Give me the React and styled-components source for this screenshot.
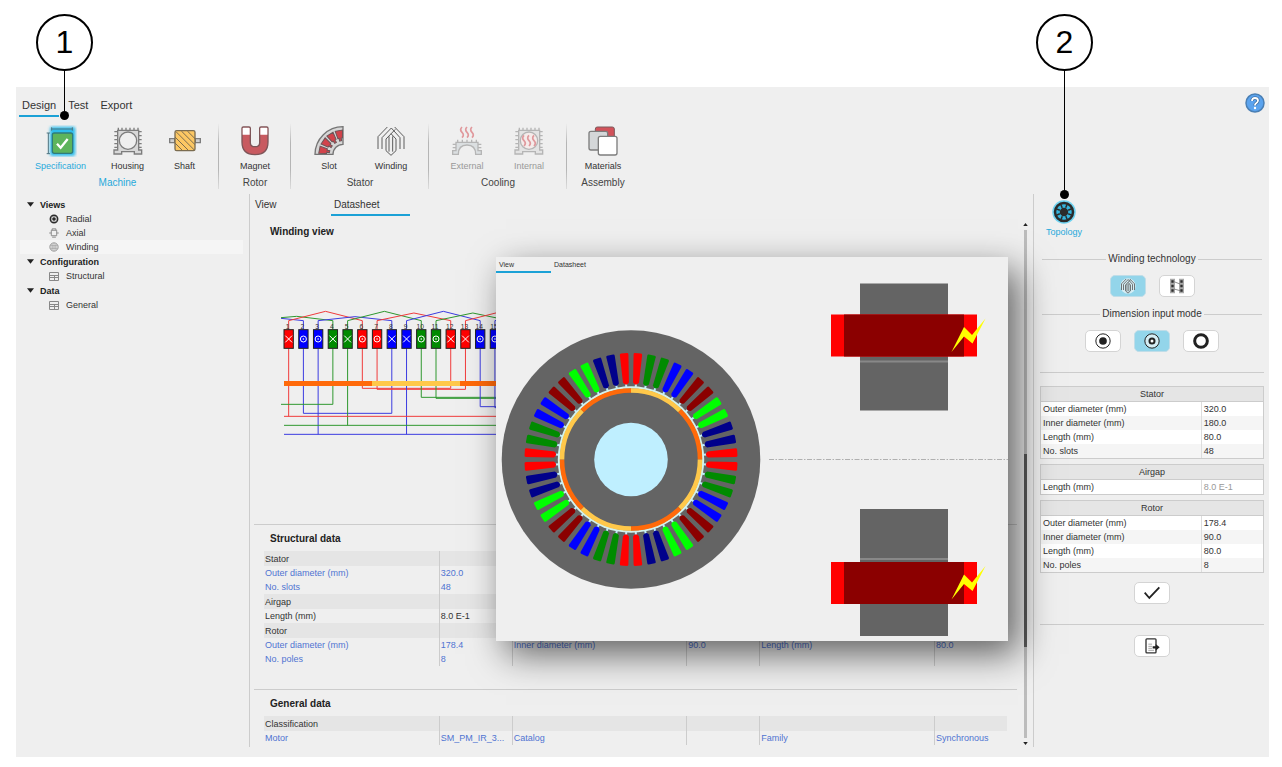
import React, { useState } from 'react';
import styled, { createGlobalStyle, css } from 'styled-components';

const GlobalStyle = createGlobalStyle`
  * {
    box-sizing: border-box;
  }
  body {
    margin: 0;
    background: #ffffff;
    color: #333333;
    font-family: 'Liberation Sans', Arial, sans-serif;
    font-size: 9px;
    line-height: 14px;
  }
  button {
    margin: 0;
    padding: 0;
    border: 0;
    background: none;
    color: inherit;
    font: inherit;
    cursor: pointer;
  }
  svg {
    display: block;
  }
`;

const Page = styled.div`
  position: relative;
  padding: 87px 13px 10px 16px;
`;
const Window = styled.div`
  display: flex;
  flex-direction: column;
  padding-bottom: 10px;
  background: #efefef;
`;

/* callouts */
const Callout = styled.div`
  position: absolute;
  z-index: 5;
  top: 14px;
  ${(p) => (p.$right ? 'right: 189px;' : 'left: 36px;')}
  display: flex;
  flex-direction: column;
  align-items: center;
  width: 57px;
  pointer-events: none;
`;
const CalloutNumber = styled.span`
  width: 57px;
  height: 57px;
  border: 2px solid #000000;
  border-radius: 50%;
  background: #ffffff;
  color: #000000;
  font-size: 32px;
  line-height: 52px;
  text-align: center;
`;
const CalloutLine = styled.span`
  width: 1px;
  height: ${(p) => p.$length}px;
  background: #000000;
`;
const CalloutDot = styled.span`
  width: 9px;
  height: 9px;
  border-radius: 50%;
  background: #000000;
`;

/* top menu */
const Menu = styled.header`
  display: flex;
  align-items: flex-start;
  justify-content: space-between;
  height: 30px;
  padding: 6px 4px 0 3px;
`;
const MenuTabs = styled.nav`
  display: flex;
  gap: 6px;
  padding-top: 5px;
`;
const MenuTab = styled.button`
  padding: 0 3px 3px;
  border-bottom: 2px solid ${(p) => (p.$active ? '#1ba1d6' : 'transparent')};
  font-size: 11px;
`;

/* toolbar */
const Toolbar = styled.div`
  display: flex;
  padding-top: 5px;
`;
const ToolGroup = styled.section`
  display: flex;
  flex-direction: column;
  align-items: center;
  gap: 3px;
  padding: 3px ${(p) => p.$pad}px 0;
  color: ${(p) => (p.$active ? '#27a9db' : '#444444')};
  background: linear-gradient(#efefef, #b5b5b5 30%, #b5b5b5 70%, #dddddd) right / 1px 66px no-repeat;
  &:last-child {
    background: none;
  }
`;
const ToolRow = styled.div`
  display: flex;
`;
const ToolButton = styled.button`
  display: flex;
  flex-direction: column;
  align-items: center;
  gap: 2px;
  width: ${(p) => p.$width}px;
  color: ${(p) => (p.$active ? '#27a9db' : '#333333')};
  &:disabled {
    color: #999999;
    cursor: default;
  }
  &:disabled svg {
    opacity: 0.5;
  }
`;
const GroupName = styled.span`
  font-size: 10px;
`;

/* three columns */
const Body = styled.div`
  display: flex;
  align-items: stretch;
  margin-top: 4px;
`;
const Sidebar = styled.aside`
  flex: 0 0 234px;
  padding: 3px 6px 0 4px;
  border-right: 1px solid #cccccc;
`;
const TreeList = styled.ul`
  margin: 0;
  padding: 0;
  list-style: none;
`;
const TreeGroup = styled.button`
  display: flex;
  align-items: center;
  gap: 6px;
  height: 15px;
  padding-left: 7px;
  font-weight: bold;
  color: #222222;
`;
const TreeItem = styled.button`
  display: flex;
  align-items: center;
  gap: 7px;
  width: 100%;
  height: 14px;
  padding-left: 29px;
  background: ${(p) => (p.$active ? '#f5f5f5' : 'none')};
`;

const Main = styled.main`
  position: relative;
  z-index: 1;
  display: flex;
  flex: 1;
  flex-direction: column;
  min-width: 0;
  border-right: 1px solid #cccccc;
`;
const Tabs = styled.div`
  display: flex;
  padding-left: 2px;
`;
const Tab = styled.button`
  width: 79px;
  padding: ${(p) => (p.$small ? '2px 3px 0' : '4px 3px 2px')};
  border-bottom: 2px solid ${(p) => (p.$active ? '#1ba1d6' : 'transparent')};
  font-size: 10px;
  text-align: left;
  ${(p) =>
    p.$small &&
    css`
      width: 55px;
      font-size: 7px;
      line-height: 12px;
    `}
`;
const SheetArea = styled.div`
  display: flex;
  flex: 1;
`;
const Sheet = styled.div`
  flex: 1;
  min-width: 0;
  padding-left: 4px;
`;
const SheetSection = styled.section`
  overflow: hidden;
  padding-bottom: ${(p) => p.$bottom}px;
  border-top: 1px solid #cccccc;
  &:first-child {
    padding-top: 1px;
    border-color: transparent;
  }
`;
const SheetTitle = styled.h2`
  margin: 7px 0 6px 16px;
  color: #222222;
  font-size: 10px;
  font-weight: bold;
  line-height: 13px;
`;
const Figure = styled.figure`
  margin: 0;
  padding: 66px 0 87px 26px;
`;
const DataTable = styled.table`
  width: calc(100% - 20px);
  margin: 0 10px;
  border-spacing: 0;
  table-layout: fixed;
`;
const ValueCol = styled.col`
  width: 73px;
`;
const DataRow = styled.tr`
  height: ${(p) => (p.$head ? 15 : 14)}px;
  background: ${(p) => (p.$head ? '#e5e5e5' : 'none')};
  color: ${(p) => (p.$link ? '#4f74d2' : '#333333')};
`;
const DataCell = styled.td`
  overflow: hidden;
  padding: 0 1px;
  border-left: 1px solid #cccccc;
  text-overflow: ellipsis;
  white-space: nowrap;
  &:first-child {
    border-left: 0;
  }
`;

const Scrollbar = styled.div`
  display: flex;
  flex: 0 0 16px;
  flex-direction: column;
  align-items: center;
  gap: 4px;
  padding: 7px 0 2px;
`;
const ScrollTrack = styled.div`
  display: flex;
  flex: 1;
  flex-direction: column;
  width: 3px;
  background: #bcbcbc;
`;
const ScrollGap = styled.div`
  flex: ${(p) => p.$size};
`;
const ScrollThumb = styled.div`
  flex: 38;
  background: #5a5a5a;
`;

const Preview = styled.section`
  position: absolute;
  top: 63px;
  right: 25px;
  width: 512px;
  background: #efefef;
  box-shadow: 10px 13px 34px rgba(0, 0, 0, 0.6);
`;
const PreviewTabs = styled.div`
  display: flex;
`;

/* right panel */
const Panel = styled.aside`
  flex: 0 0 235px;
  padding: 6px 5px 0 6px;
`;
const TopologyButton = styled.button`
  display: flex;
  flex-direction: column;
  align-items: center;
  gap: 1px;
  width: 48px;
  color: #27a9db;
`;
const Choice = styled.fieldset`
  min-width: 0;
  margin: 0;
  padding: 0 2px;
  border: 0;
`;
const ChoiceName = styled.div`
  display: flex;
  align-items: center;
  gap: 2px;
  margin-top: ${(p) => p.$top}px;
  font-size: 10px;
  &::before,
  &::after {
    content: '';
    flex: 1;
    height: 1px;
    background: #cccccc;
  }
`;
const ButtonRow = styled.div`
  display: flex;
  justify-content: center;
  gap: 13px;
  margin-top: ${(p) => p.$top}px;
`;
const IconButton = styled.button`
  display: grid;
  place-items: center;
  width: 36px;
  height: 22px;
  border: 1px solid ${(p) => (p.$active ? '#c0dde8' : '#d4d4d4')};
  border-radius: 5px;
  background: ${(p) => (p.$active ? '#93d5ea' : '#ffffff')};
`;
const Rule = styled.hr`
  height: 1px;
  margin: 20px 0 ${(p) => p.$bottom}px;
  border: 0;
  background: #cccccc;
`;
const ParamTable = styled.table`
  width: 100%;
  margin-bottom: 5px;
  border: 1px solid #cccccc;
  border-spacing: 0;
  background: #ffffff;
  table-layout: fixed;
`;
const ParamHead = styled.th`
  height: 15px;
  padding: 0;
  border-bottom: 1px solid #cccccc;
  background: #e5e5e5;
  font-weight: normal;
`;
const ParamRow = styled.tr`
  height: 14px;
  &:nth-child(even) {
    background: #f5f5f5;
  }
`;
const ParamCell = styled.td`
  padding: 0 2px;
  color: ${(p) => (p.$muted ? '#999999' : '#333333')};
  & + & {
    border-left: 1px solid #dddddd;
  }
`;

/* icons, all drawn on a 96 unit grid */
const Icon = ({ size = 32, children }) => (
  <svg width={size} height={size} viewBox="0 0 96 96" fill="none" aria-hidden="true">
    {children}
  </svg>
);

const SpecificationIcon = () => (
  <Icon>
    <defs>
      <filter id="glow" x="-30%" y="-30%" width="160%" height="160%">
        <feGaussianBlur stdDeviation="4" />
      </filter>
    </defs>
    <rect x="15" y="5" width="76" height="88" rx="6" fill="#2fbdec" filter="url(#glow)" />
    <path d="M20 12h62M20 7v10M82 7v10M10 24v62M5 24h10M5 86h10" stroke="#4d7480" strokeWidth="3" />
    <rect x="22" y="24" width="61" height="61" rx="6" fill="#5db45c" stroke="#2f7c7c" strokeWidth="4" />
    <path d="M36 56l11 12 21-26" stroke="#ffffff" strokeWidth="7" />
  </Icon>
);
const CaseFrame = ({ hole }) => (
  <>
    <path
      d="M19 17v-9M30 17v-9M42 17v-9M54 17v-9M66 17v-9M78 17v-9M17 20H7M17 32H7M17 44H7M17 56H7M17 67H7M80 20h9M80 32h9M80 44h9M80 56h9M80 67h9"
      stroke="#7d7d7d"
      strokeWidth="4"
    />
    <path
      d="M17 16h63v59h9v12H67v-7H29v7H6V75h11z"
      fill="#d8d8d8"
      stroke="#7d7d7d"
      strokeWidth="4"
    />
    <circle cx="48" cy="47" r="26" fill={hole} stroke="#7d7d7d" strokeWidth="4" />
  </>
);
const HousingIcon = () => (
  <Icon>
    <CaseFrame hole="#efefef" />
  </Icon>
);
const ShaftIcon = () => (
  <Icon>
    <path d="M2 41h15v12H2zM79 41h15v12H79z" fill="#d0d0d0" stroke="#7d7d7d" strokeWidth="4" />
    <rect x="18" y="17" width="60" height="60" rx="5" fill="#fcc763" stroke="#7b6c50" strokeWidth="4" />
    <path d="M18 54l23 23M18 36l41 41M21 20l55 55M37 18l41 41M55 18l23 23" stroke="#7b6c50" strokeWidth="3" />
  </Icon>
);
const MagnetIcon = () => (
  <Icon>
    <path
      d="M9 10q0-4 4-4h17q4 0 4 4v43q0 12 14 12t14-12V10q0-4 4-4h17q4 0 4 4v41q0 38-39 38T9 51z"
      fill="#c85a60"
      stroke="#7d5558"
      strokeWidth="4"
    />
    <path d="M11 10q0-2 2-2h17q2 0 2 2v19H11zM64 10q0-2 2-2h17q2 0 2 2v19H64z" fill="#ffffff" />
  </Icon>
);
const SlotIcon = () => (
  <Icon>
    <path d="M6 88A84 84 0 0 1 90 5v53a30 30 0 0 0-30 30z" fill="#d6d6d6" stroke="#757575" strokeWidth="4" />
    {[11, 34, 57, 80].map((angle) => (
      <path
        key={angle}
        d="M18 77l23 4v4h8v6h-8v4l-23 4z"
        transform={`rotate(${angle} 90 88)`}
        fill="#d2434b"
        stroke="#6c5558"
        strokeWidth="3"
      />
    ))}
  </Icon>
);
const WindingIcon = ({ size, width = 3, disc }) => (
  <Icon size={size}>
    {disc && <circle cx="48" cy="48" r="46" fill="#d5edf4" />}
    <path
      d="M9 72V35L37 6M21 72V38L49 9M33 77V42L61 13M33 77l15 14 15-14V42L48 26M42 80V34M53 80V34M75 72V38L49 9M87 72V35L59 6"
      stroke="#5c5c5c"
      strokeWidth={width}
    />
  </Icon>
);
const Heat = ({ y = 0 }) => (
  <path
    d={`M33 ${y + 5}q-8 8 0 16t0 16M48 ${y + 5}q-8 8 0 16t0 16M63 ${y + 5}q-8 8 0 16t0 16`}
    stroke="#d2434b"
    strokeWidth="5"
  />
);
const ExternalIcon = () => (
  <Icon>
    <Heat y={1} />
    <path d="M20 53v-9M34 53v-9M48 53v-9M62 53v-9M76 53v-9M15 58H5M15 68H5M15 78H5M81 58h10M81 68h10M81 78h10" stroke="#7d7d7d" strokeWidth="4" />
    <path d="M15 52h66v25h10v11H74q0-28-26-28T22 88H5V77h10z" fill="#c8d0d4" stroke="#7d7d7d" strokeWidth="4" />
  </Icon>
);
const InternalIcon = () => (
  <Icon>
    <CaseFrame hole="#fbe9e6" />
    <Heat y={26} />
  </Icon>
);
const MaterialsIcon = () => (
  <Icon>
    <rect x="25" y="6" width="57" height="57" rx="6" fill="#d2525a" stroke="#7a5a5c" strokeWidth="3" />
    <rect x="6" y="19" width="56" height="56" rx="6" fill="#d4d7d9" stroke="#7d7d7d" strokeWidth="4" />
    <rect x="34" y="34" width="56" height="56" rx="6" fill="#ffffff" stroke="#7d7d7d" strokeWidth="4" />
  </Icon>
);
const WheelIcon = ({ size, active }) => (
  <Icon size={size}>
    {active && <circle cx="48" cy="48" r="47" fill="#6fd3f1" />}
    <circle cx="48" cy="48" r="36" fill={active ? '#35b5de' : '#efefef'} stroke="#2b2b2b" strokeWidth={active ? 10 : 13} />
    {[0, 45, 90, 135, 180, 225, 270, 315].map((angle) => (
      <path key={angle} d="M48 30V12" transform={`rotate(${angle + 22} 48 48)`} stroke="#2b2b2b" strokeWidth="6" />
    ))}
    <circle cx="48" cy="48" r="17" fill="#2b2b2b" />
  </Icon>
);
const AxialIcon = () => (
  <Icon size={10}>
    <path d="M22 22h52v52H22zM2 48h20M74 48h20M30 8h36M30 88h36M30 8v14M66 8v14" stroke="#888888" strokeWidth="9" />
  </Icon>
);
const CoilIcon = () => (
  <Icon size={10}>
    <circle cx="48" cy="48" r="40" stroke="#888888" strokeWidth="8" />
    <path d="M30 14v68M48 8v80M66 14v68M10 36h76M10 60h76" stroke="#999999" strokeWidth="7" />
  </Icon>
);
const SheetIcon = () => (
  <svg width="10" height="9" viewBox="0 0 10 9" fill="none" stroke="#888888" aria-hidden="true">
    <path d="M.5 .5h9v8h-9zM.5 3.500h9M5.500 3.500v5M.5 5.500h9" />
  </svg>
);
const HairpinIcon = () => (
  <Icon size={16}>
    <path d="M6 5h30v86H6zM60 5h30v86H60z" fill="#a9a9a9" />
    <path d="M14 14h14v14H14zM14 40h14v16H14zM14 68h14v14H14zM68 14h14v14H68zM68 40h14v16H68zM68 68h14v14H68z" fill="#2d2d2d" />
    <path d="M30 22l36 14M30 66l36 10" stroke="#777777" strokeWidth="5" />
  </Icon>
);
const RadiusIcon = ({ kind }) => (
  <Icon size={16}>
    {kind === 'ring' && <circle cx="48" cy="48" r="38" stroke="#222222" strokeWidth="18" />}
    {kind !== 'ring' && <circle cx="48" cy="48" r="43" fill={kind === 'both' ? '#d5edf4' : 'none'} stroke="#222222" strokeWidth="6" />}
    {kind === 'core' && <circle cx="48" cy="48" r="23" fill="#222222" />}
    {kind === 'both' && <circle cx="48" cy="48" r="15" fill="#ffffff" stroke="#222222" strokeWidth="12" />}
  </Icon>
);
const CheckIcon = () => (
  <Icon size={16}>
    <path d="M4 46l28 32L92 14" stroke="#222222" strokeWidth="11" />
  </Icon>
);
const ExportIcon = () => (
  <Icon size={16}>
    <rect x="12" y="5" width="60" height="84" rx="5" stroke="#333333" strokeWidth="8" />
    <path d="M26 37h22M26 50h22M26 62h22M26 74h34" stroke="#999999" strokeWidth="5" />
    <path d="M52 49h18V36l24 20-24 20V63H52z" fill="#222222" />
  </Icon>
);
const HelpIcon = () => (
  <svg width="20" height="20" viewBox="0 0 20 20" fill="none" aria-hidden="true">
    <circle cx="10" cy="10" r="9" fill="#5ba3ee" stroke="#4a7fb4" strokeWidth="1.500" />
    <path d="M7 8q0-3 3-3t3 2.500q0 1.500-1.500 2.500T10 12v.5" stroke="#315e8d" strokeWidth="3" />
    <path d="M7 8q0-3 3-3t3 2.500q0 1.500-1.500 2.500T10 12v.5" stroke="#ffffff" strokeWidth="1.800" />
    <circle cx="10" cy="15" r="1.200" fill="#ffffff" />
  </svg>
);
const Arrow = ({ up, width = 7, height = 5 }) => (
  <svg width={width} height={height} viewBox="0 0 6 4" aria-hidden="true">
    <path d={up ? 'M0 4h6L3 0z' : 'M0 0h6L3 4z'} fill="#222222" />
  </svg>
);

/* winding diagram */
const PHASES = ['#ff0000', '#0000ff', '#008b00'];
const LINES = ['#f03c3c', '#3c3ce0', '#2f982f'];
const SLOTS = Array.from({ length: 48 }, (_, i) => i + 1);
const slotX = (n) => 116 + (n - 1) * 44.2;
const phaseOf = (n) => Math.floor(n / 2) % 3;

const WIRES = [
  [0, `M${slotX(1)} 175V379`],
  [1, `M${slotX(2)} 175V370H${slotX(8)}V175`],
  [1, `M${slotX(3)} 175V433`],
  [2, `M${slotX(4)} 175V343H93`],
  [2, `M${slotX(5)} 175V406`],
  [0, `M${slotX(6)} 175V295H${slotX(12)}V175`],
  [0, `M${slotX(7)} 175V298H${slotX(13)}V175`],
  [1, `M${slotX(9)} 175V433`],
  [2, `M${slotX(10)} 175V322H${slotX(16)}V175`],
  [2, `M${slotX(11)} 175V325H${slotX(17)}V175`],
  [1, `M${slotX(14)} 175V350H${slotX(20)}V175`],
  [1, `M${slotX(15)} 175V353H${slotX(21)}V175`],
  [0, 'M102 379H2220'],
  [2, 'M102 406H2220'],
  [1, 'M102 433H2220'],
  [1, `M93 85L${slotX(2)} 92V118`],
  [2, `M93 83L140 79L${slotX(4)} 92V118`],
];

const WindingDiagram = () => (
  <svg width="720" height="127" viewBox="90 60 2160 381" fill="none" role="img" aria-label="Winding view">
    {WIRES.map(([phase, d]) => (
      <path key={d} d={d} stroke={LINES[phase]} strokeWidth="3" />
    ))}
    {SLOTS.filter((n) => n % 2 === 1 && n < 44).map((n) => {
      const peak = n === 3 ? 80 : n % 4 === 1 ? 64 : 69;
      return (
        <path
          key={n}
          d={`M${slotX(n)} 118V92L${slotX(n + 2.5)} ${peak}L${slotX(n + 5)} 92V118`}
          stroke={LINES[phaseOf(n)]}
          strokeWidth="3"
        />
      );
    })}
    {Array.from({ length: 8 }, (_, i) => (
      <rect key={i} x={102 + i * 264} y="273" width="264" height="15" fill={i % 2 ? '#ffc84a' : '#ff6a0a'} />
    ))}
    {SLOTS.map((n) => (
      <g key={n} transform={`translate(${slotX(n)} 147)`}>
        <text x="-3" y="-31" textAnchor="middle" fontSize="20" fill="#333333">
          {n}
        </text>
        <rect x="-14" y="-28" width="28" height="56" fill={PHASES[phaseOf(n)]} stroke="#222222" strokeWidth="3" />
        {Math.floor(n / 2) % 2 === 0 ? (
          <path d="M-10 -10L10 10M-10 10L10 -10" stroke="#ffffff" strokeWidth="3" />
        ) : (
          <>
            <circle r="9" stroke="#ffffff" strokeWidth="3" />
            <circle r="2.500" fill="#ffffff" />
          </>
        )}
      </g>
    ))}
  </svg>
);

/* machine cross sections */
const COIL_COLORS = ['#ff0000', '#008b00', '#0000ff', '#8b0000', '#00ff00', '#00008b'];
const arcPoint = (r, deg) => {
  const a = (deg * Math.PI) / 180;
  return `${(r * Math.sin(a)).toFixed(2)} ${(-r * Math.cos(a)).toFixed(2)}`;
};

const AxialHalf = ({ flip }) => (
  <>
    <rect x="364" width="88" height="127" fill="#646464" />
    <rect x="364" y={flip ? 49 : 77} width="88" height="2" fill="#888888" />
    <rect x="335" y={flip ? 53 : 31} width="146" height="42" fill="#ff0000" />
    <rect x="348" y={flip ? 53 : 31} width="120" height="42" fill="#8b0000" />
    <path
      d="M455.500 68.500L468 43.500l8 8 13.500-16.500L476.500 60l-8.500-7z"
      transform={flip ? 'translate(0 22)' : undefined}
      fill="#ffff00"
    />
  </>
);

const MachineDrawing = () => (
  <svg width="512" height="368" viewBox="0 0 512 368" fill="none" role="img" aria-label="Radial and axial view">
    <g transform="translate(135 186.500)">
      <circle r="129.300" fill="#646464" />
      {Array.from({ length: 48 }, (_, i) => (
        <g key={i} transform={`rotate(${3.75 + i * 7.5})`}>
          <path d="M0 -71V-77" stroke="#bfefff" strokeWidth="2" />
          <path
            d="M-3 -77L-4.300 -105Q-4.300 -106.500 -3 -106.500H3Q4.300 -106.500 4.300 -105L3 -77Q0 -73 -3 -77z"
            fill={COIL_COLORS[Math.floor((i + 1) / 2) % 6]}
          />
        </g>
      ))}
      <circle r="73.200" fill="#d2f2ee" />
      <circle r="71" fill="#646464" />
      {Array.from({ length: 8 }, (_, i) => (
        <path
          key={i}
          d={`M${arcPoint(69, i * 45)}A69 69 0 0 1 ${arcPoint(69, i * 45 + 45)}`}
          stroke={i % 2 ? '#ff6a0a' : '#ffc84a'}
          strokeWidth="4.600"
        />
      ))}
      <circle r="36.800" fill="#bfefff" />
    </g>
    <g transform="translate(0 10.500)">
      <AxialHalf />
    </g>
    <g transform="translate(0 236)">
      <AxialHalf flip />
    </g>
    <path d="M273 186.500H512" stroke="#b0b0b0" strokeDasharray="5 1.500 1.500 1.500" />
  </svg>
);

const TOOLBAR = [
  {
    name: 'Machine',
    pad: 11,
    active: true,
    tools: [
      { name: 'Specification', icon: SpecificationIcon, width: 67, active: true },
      { name: 'Housing', icon: HousingIcon, width: 67 },
      { name: 'Shaft', icon: ShaftIcon, width: 47 },
    ],
  },
  { name: 'Rotor', pad: 11, tools: [{ name: 'Magnet', icon: MagnetIcon, width: 50 }] },
  {
    name: 'Stator',
    pad: 7,
    tools: [
      { name: 'Slot', icon: SlotIcon, width: 62 },
      { name: 'Winding', icon: WindingIcon, width: 62 },
    ],
  },
  {
    name: 'Cooling',
    pad: 7,
    tools: [
      { name: 'External', icon: ExternalIcon, width: 62, disabled: true },
      { name: 'Internal', icon: InternalIcon, width: 62, disabled: true },
    ],
  },
  { name: 'Assembly', pad: 11, tools: [{ name: 'Materials', icon: MaterialsIcon, width: 50 }] },
];

const TREE = [
  {
    name: 'Views',
    items: [
      { name: 'Radial', icon: <WheelIcon size={10} /> },
      { name: 'Axial', icon: <AxialIcon /> },
      { name: 'Winding', icon: <CoilIcon /> },
    ],
  },
  { name: 'Configuration', items: [{ name: 'Structural', icon: <SheetIcon /> }] },
  { name: 'Data', items: [{ name: 'General', icon: <SheetIcon /> }] },
];

const STRUCTURAL = [
  { head: true, cells: ['Stator'] },
  { link: true, cells: ['Outer diameter (mm)', '320.0', 'Inner diameter (mm)', '180.0', 'Length (mm)', '80.0'] },
  { link: true, cells: ['No. slots', '48'] },
  { head: true, cells: ['Airgap'] },
  { cells: ['Length (mm)', '8.0 E-1'] },
  { head: true, cells: ['Rotor'] },
  { link: true, cells: ['Outer diameter (mm)', '178.4', 'Inner diameter (mm)', '90.0', 'Length (mm)', '80.0'] },
  { link: true, cells: ['No. poles', '8'] },
];
const GENERAL = [
  { head: true, cells: ['Classification'] },
  { link: true, cells: ['Motor', 'SM_PM_IR_3...', 'Catalog', '', 'Family', 'Synchronous'] },
];

const PARAMS = [
  {
    name: 'Stator',
    rows: [
      ['Outer diameter (mm)', '320.0'],
      ['Inner diameter (mm)', '180.0'],
      ['Length (mm)', '80.0'],
      ['No. slots', '48'],
    ],
  },
  { name: 'Airgap', muted: true, rows: [['Length (mm)', '8.0 E-1']] },
  {
    name: 'Rotor',
    rows: [
      ['Outer diameter (mm)', '178.4'],
      ['Inner diameter (mm)', '90.0'],
      ['Length (mm)', '80.0'],
      ['No. poles', '8'],
    ],
  },
];

const Datasheet = ({ rows }) => (
  <DataTable>
    <colgroup>
      <col />
      <ValueCol />
      <col />
      <ValueCol />
      <col />
      <ValueCol />
    </colgroup>
    <tbody>
      {rows.map((row, i) => (
        <DataRow key={i} $head={row.head} $link={row.link}>
          {[0, 1, 2, 3, 4, 5].map((c) => (
            <DataCell key={c}>{row.cells[c]}</DataCell>
          ))}
        </DataRow>
      ))}
    </tbody>
  </DataTable>
);

const App = () => {
  const [menu, setMenu] = useState('Design');
  const [node, setNode] = useState('Winding');
  const [tech, setTech] = useState('Classical');
  const [mode, setMode] = useState('both');

  return (
    <Page>
      <GlobalStyle />
      <Callout>
        <CalloutNumber>1</CalloutNumber>
        <CalloutLine $length={40} />
        <CalloutDot />
      </Callout>
      <Callout $right>
        <CalloutNumber>2</CalloutNumber>
        <CalloutLine $length={119} />
        <CalloutDot />
      </Callout>
      <Window>
        <Menu>
          <MenuTabs>
            {['Design', 'Test', 'Export'].map((name) => (
              <MenuTab key={name} $active={menu === name} onClick={() => setMenu(name)}>
                {name}
              </MenuTab>
            ))}
          </MenuTabs>
          <button aria-label="Help">
            <HelpIcon />
          </button>
        </Menu>
        <Toolbar>
          {TOOLBAR.map((group) => (
            <ToolGroup key={group.name} $pad={group.pad} $active={group.active}>
              <ToolRow>
                {group.tools.map(({ name, icon: ToolIcon, width, active, disabled }) => (
                  <ToolButton key={name} $width={width} $active={active} disabled={disabled}>
                    <ToolIcon />
                    {name}
                  </ToolButton>
                ))}
              </ToolRow>
              <GroupName>{group.name}</GroupName>
            </ToolGroup>
          ))}
        </Toolbar>
        <Body>
          <Sidebar>
            <TreeList>
              {TREE.map((group) => (
                <li key={group.name}>
                  <TreeGroup>
                    <Arrow />
                    {group.name}
                  </TreeGroup>
                  <TreeList>
                    {group.items.map((item) => (
                      <li key={item.name}>
                        <TreeItem $active={node === item.name} onClick={() => setNode(item.name)}>
                          {item.icon}
                          {item.name}
                        </TreeItem>
                      </li>
                    ))}
                  </TreeList>
                </li>
              ))}
            </TreeList>
          </Sidebar>
          <Main>
            <Tabs>
              <Tab>View</Tab>
              <Tab $active>Datasheet</Tab>
            </Tabs>
            <SheetArea>
              <Sheet>
                <SheetSection $bottom={0}>
                  <SheetTitle>Winding view</SheetTitle>
                  <Figure>
                    <WindingDiagram />
                  </Figure>
                </SheetSection>
                <SheetSection $bottom={23}>
                  <SheetTitle>Structural data</SheetTitle>
                  <Datasheet rows={STRUCTURAL} />
                </SheetSection>
                <SheetSection $bottom={2}>
                  <SheetTitle>General data</SheetTitle>
                  <Datasheet rows={GENERAL} />
                </SheetSection>
              </Sheet>
              <Scrollbar>
                <Arrow up width={5} height={3} />
                <ScrollTrack>
                  <ScrollGap $size={44} />
                  <ScrollThumb />
                  <ScrollGap $size={18} />
                </ScrollTrack>
                <Arrow width={5} height={3} />
              </Scrollbar>
            </SheetArea>
            <Preview>
              <PreviewTabs>
                <Tab $small $active>
                  View
                </Tab>
                <Tab $small>Datasheet</Tab>
              </PreviewTabs>
              <MachineDrawing />
            </Preview>
          </Main>
          <Panel>
            <TopologyButton>
              <WheelIcon size={24} active />
              Topology
            </TopologyButton>
            <Choice aria-label="Winding technology">
              <ChoiceName $top={13}>Winding technology</ChoiceName>
              <ButtonRow $top={9}>
                <IconButton aria-label="Classical" $active={tech === 'Classical'} onClick={() => setTech('Classical')}>
                  <WindingIcon size={16} width={5} disc />
                </IconButton>
                <IconButton aria-label="Hairpin" $active={tech === 'Hairpin'} onClick={() => setTech('Hairpin')}>
                  <HairpinIcon />
                </IconButton>
              </ButtonRow>
            </Choice>
            <Choice aria-label="Dimension input mode">
              <ChoiceName $top={10}>Dimension input mode</ChoiceName>
              <ButtonRow $top={9}>
                {['core', 'both', 'ring'].map((kind) => (
                  <IconButton key={kind} aria-label={kind} $active={mode === kind} onClick={() => setMode(kind)}>
                    <RadiusIcon kind={kind} />
                  </IconButton>
                ))}
              </ButtonRow>
            </Choice>
            <Rule $bottom={13} />
            {PARAMS.map((group) => (
              <ParamTable key={group.name}>
                <colgroup>
                  <col />
                  <col width="28%" />
                </colgroup>
                <thead>
                  <tr>
                    <ParamHead colSpan={2}>{group.name}</ParamHead>
                  </tr>
                </thead>
                <tbody>
                  {group.rows.map(([label, value]) => (
                    <ParamRow key={label}>
                      <ParamCell>{label}</ParamCell>
                      <ParamCell $muted={group.muted}>{value}</ParamCell>
                    </ParamRow>
                  ))}
                </tbody>
              </ParamTable>
            ))}
            <ButtonRow $top={9}>
              <IconButton aria-label="Apply">
                <CheckIcon />
              </IconButton>
            </ButtonRow>
            <Rule $bottom={10} />
            <ButtonRow $top={0}>
              <IconButton aria-label="Export">
                <ExportIcon />
              </IconButton>
            </ButtonRow>
          </Panel>
        </Body>
      </Window>
    </Page>
  );
};

export default App;
